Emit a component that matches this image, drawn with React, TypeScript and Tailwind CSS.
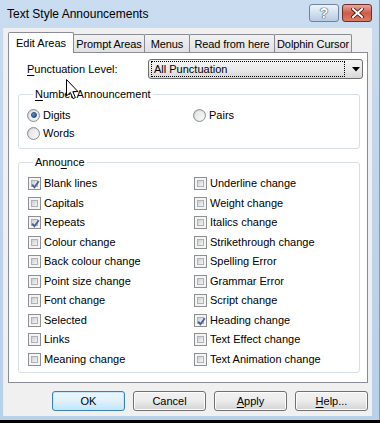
import type { ReactNode } from "react";

const LEFT = [
  "Blank lines",
  "Capitals",
  "Repeats",
  "Colour change",
  "Back colour change",
  "Point size change",
  "Font change",
  "Selected",
  "Links",
  "Meaning change",
];

const RIGHT = [
  "Underline change",
  "Weight change",
  "Italics change",
  "Strikethrough change",
  "Spelling Error",
  "Grammar Error",
  "Script change",
  "Heading change",
  "Text Effect change",
  "Text Animation change",
];

const CHECKED = new Set(["Blank lines", "Repeats", "Heading change"]);

const TABS = [
  { label: "Prompt Areas", w: "w-[72px]" },
  { label: "Menus", w: "w-[46px]" },
  { label: "Read from here", w: "w-[86px]" },
  { label: "Dolphin Cursor", w: "w-[78px]" },
];

const CheckBox = ({ label, checked }: { label: string; checked: boolean }) => (
  <div className="flex items-center h-[19.5px]">
    <span className="relative w-[13px] h-[13px] shrink-0 border border-[#8e8f8f] bg-[#f4f4f4] p-[2px]">
      <span className="block w-full h-full border border-[#aeb1b5] bg-gradient-to-br from-[#cbcfd3] to-[#f5f5f5]" />
      {checked && (
        <svg className="absolute left-[1px] top-[1px]" width="11" height="11" viewBox="0 0 11 11">
          <path d="M2.2 5.6 L4.4 8.2 L8.8 2.2" fill="none" stroke="#4a61a0" strokeWidth="1.8" />
        </svg>
      )}
    </span>
    <span className="ml-[3px] leading-[13px]">{label}</span>
  </div>
);

const Radio = ({ label, checked }: { label: string; checked?: boolean }) => (
  <div className="flex items-center h-[18px]">
    <span className="relative w-[13px] h-[13px] shrink-0 rounded-full border border-[#8e8f8f] bg-gradient-to-br from-[#c6cacf] to-[#f6f6f6] flex items-center justify-center">
      <span className="w-[9px] h-[9px] rounded-full bg-gradient-to-br from-[#e2e4e6] to-[#f9f9f9] flex items-center justify-center">
        {checked && (
          <span className="w-[6px] h-[6px] rounded-full bg-gradient-to-br from-[#6aa6e0] to-[#1b4f96] border border-[#1d4a88]" />
        )}
      </span>
    </span>
    <span className="ml-[3px] leading-[13px]">{label}</span>
  </div>
);

const Button = ({ children, primary }: { children: ReactNode; primary?: boolean }) => (
  <button
    type="button"
    className={
      primary
        ? "w-[73px] h-[20px] rounded-[3px] border border-[#3c7fb1] bg-gradient-to-b from-[#eaf6fd] via-[#e1f0fa] to-[#bee6fd] shadow-[inset_0_0_0_1px_#c7e6f9] leading-[18px]"
        : "w-[73px] h-[20px] rounded-[3px] border border-[#707070] bg-gradient-to-b from-[#f2f2f2] via-[#ebebeb] to-[#d4d4d4] shadow-[inset_0_0_0_1px_#fcfcfc] leading-[18px]"
    }
  >
    {children}
  </button>
);

export default function App() {
  return (
    <div className="w-[380px] h-[423px] bg-black overflow-hidden text-[11px] text-black font-['Liberation_Sans',Arial,sans-serif]">
      <div className="relative h-[420px] flex flex-col bg-gradient-to-b from-[#c9dcf0] via-[#bfd4ea] to-[#b9d0e9] border-r border-[#7f9db9]">
        {/* title bar */}
        <div className="h-[28px] flex items-start">
          <div className="pl-[7px] pt-[6px] text-[12px] leading-[16px] text-black">Text Style Announcements</div>
          <div className="ml-auto mr-[7px] mt-[4px] flex gap-[3px]">
            <div className="w-[30px] h-[18px] rounded-[3px] border border-[#6e83a0] bg-gradient-to-b from-[#eef4fa] via-[#d3e0ee] to-[#b6cbe2] flex items-center justify-center">
              <span className="text-[14px] font-bold leading-none text-white [text-shadow:0_0_1px_#2f4a6c,0_0_1px_#2f4a6c,0_0_1px_#2f4a6c]">?</span>
            </div>
            <div className="w-[30px] h-[18px] rounded-[3px] border border-[#6b2f26] bg-gradient-to-b from-[#e8a89f] via-[#cf5a4a] to-[#d97b63] flex items-center justify-center">
              <svg width="13" height="10" viewBox="0 0 13 10">
                <path d="M2 1 L11 9 M11 1 L2 9" stroke="#4a1a14" strokeWidth="3.6" strokeLinecap="square" />
                <path d="M2 1 L11 9 M11 1 L2 9" stroke="#ffffff" strokeWidth="2" strokeLinecap="square" />
              </svg>
            </div>
          </div>
        </div>

        {/* client area */}
        <div className="ml-[3px] mr-[7px] h-[388px] bg-[#f0f0f0] border-l border-[#e4eef8] px-[4px] pt-[4px] flex flex-col">
          {/* tabs */}
          <div className="relative z-10 h-[21px] -mb-px flex items-start">
            <div className="w-[66px] h-[21px] border-x border-t border-[#898c95] rounded-t-[2px] bg-white flex justify-center pt-[4px] leading-[13px]">
              Edit Areas
            </div>
            {TABS.map((t) => (
              <div
                key={t.label}
                className={`${t.w} -ml-px mt-[2px] h-[18px] border-x border-t border-[#898c95] rounded-t-[2px] bg-gradient-to-b from-[#f2f2f2] to-[#e1e1e1] flex justify-center pt-[3px] leading-[13px] tracking-[-0.1px]`}
              >
                {t.label}
              </div>
            ))}
          </div>

          {/* tab page */}
          <div className="h-[331px] border border-[#898c95] bg-white flex flex-col">
            <div className="mt-[6px] h-[20px] flex items-center">
              <span className="pl-[18px] w-[139px] leading-[13px]">
                <span className="underline underline-offset-[2px]">P</span>unctuation Level:
              </span>
              <div className="relative w-[215px] h-[20px] rounded-[3px] border border-[#707070] bg-gradient-to-b from-[#f2f2f2] via-[#ebebeb] to-[#d6d6d6] flex items-center">
                <div className="ml-[2px] w-[194px] h-[16px] border border-dotted border-black flex items-center pl-[2px] leading-[13px]">
                  All Punctuation
                </div>
                <svg className="ml-[7px]" width="8" height="5" viewBox="0 0 8 5">
                  <path d="M0 0 H8 L4 4.5 Z" fill="#000" />
                </svg>
              </div>
            </div>

            <fieldset className="mt-[9px] ml-[9px] w-[342px] h-[61px] border border-[#d5dfe5] rounded-[3px] pl-[8px]">
              <legend className="ml-[6px] px-[2px] leading-[13px]">
                <span className="underline underline-offset-[2px]">N</span>umber Announcement
              </legend>
              <div className="mt-[5px] grid grid-cols-[166px_1fr]">
                <Radio label="Digits" checked />
                <Radio label="Pairs" />
                <Radio label="Words" />
              </div>
            </fieldset>

            <fieldset className="mt-[7px] ml-[9px] w-[342px] h-[217px] border border-[#d5dfe5] rounded-[3px] pl-[9px]">
              <legend className="ml-[5px] px-[2px] leading-[13px]">
                Anno<span className="underline underline-offset-[2px]">u</span>nce
              </legend>
              <div className="mt-[5px] grid grid-cols-[166px_1fr]">
                <div className="flex flex-col">
                  {LEFT.map((l) => (
                    <CheckBox key={l} label={l} checked={CHECKED.has(l)} />
                  ))}
                </div>
                <div className="flex flex-col">
                  {RIGHT.map((l) => (
                    <CheckBox key={l} label={l} checked={CHECKED.has(l)} />
                  ))}
                </div>
              </div>
            </fieldset>
          </div>

          {/* buttons */}
          <div className="mt-[8px] flex justify-end gap-[8px]">
            <Button primary>OK</Button>
            <Button>Cancel</Button>
            <Button>
              <span className="underline underline-offset-[2px]">A</span>pply
            </Button>
            <Button>
              <span className="underline underline-offset-[2px]">H</span>elp...
            </Button>
          </div>
        </div>

        {/* mouse cursor */}
        <svg className="pointer-events-none absolute left-[66px] top-[79px]" width="13" height="21" viewBox="0 0 13 21">
          <path d="M0.5 0.5 V17 L4.3 13.4 L7 19.6 L9.4 18.6 L6.8 12.6 H12 Z" fill="#fff" stroke="#000" strokeWidth="1" />
        </svg>
      </div>
    </div>
  );
}
